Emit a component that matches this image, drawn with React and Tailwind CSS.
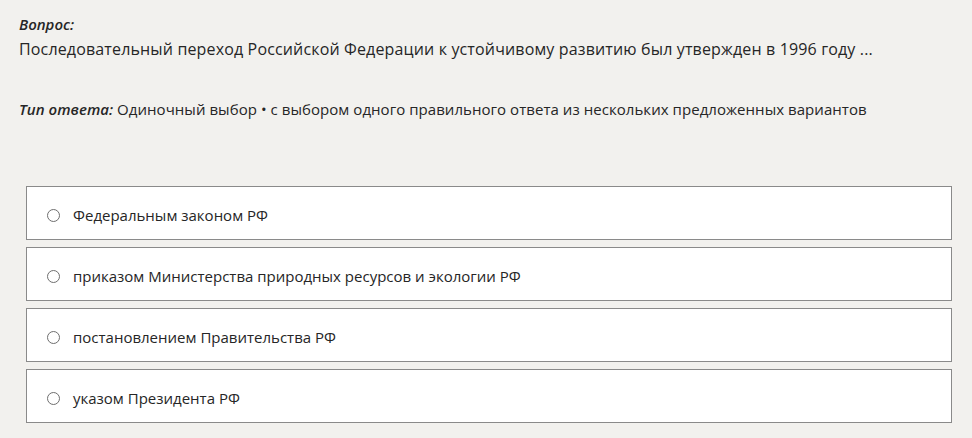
export default function App() {
  const options = [
    "Федеральным законом РФ",
    "приказом Министерства природных ресурсов и экологии РФ",
    "постановлением Правительства РФ",
    "указом Президента РФ",
  ];
  return (
    <div className="w-[972px] h-[438px] bg-[#f2f1ee] text-[#262626] overflow-hidden" style={{ fontFamily: '"Open Sans", "Noto Sans", sans-serif' }}>
      <div className="pl-[19px] pt-[12px]">
        <div className="text-[15px] leading-[25px] font-semibold italic">Вопрос:</div>
        <div className="text-[16px] leading-[25px] tracking-[0.15px] whitespace-nowrap">
          Последовательный переход Российской Федерации к устойчивому развитию был утвержден в 1996 году ...
        </div>
        <div className="mt-[35px] text-[15px] leading-[25px] tracking-[0.05px] whitespace-nowrap">
          <span className="font-semibold italic">Тип ответа:</span> Одиночный выбор • с выбором одного правильного ответа из нескольких предложенных вариантов
        </div>
      </div>
      <div className="ml-[26px] mt-[64px] w-[926px] flex flex-col gap-[7px]">
        {options.map((o) => (
          <div key={o} className="h-[54px] bg-white border border-[#8a8a8a] flex items-center pl-[20px] pt-[4px]">
            <span className="w-[13px] h-[13px] rounded-full border-[1.5px] border-[#6e6e6e] bg-white shrink-0"></span>
            <span className="ml-[13px] text-[15px] text-[#262626]">{o}</span>
          </div>
        ))}
      </div>
    </div>
  );
}
